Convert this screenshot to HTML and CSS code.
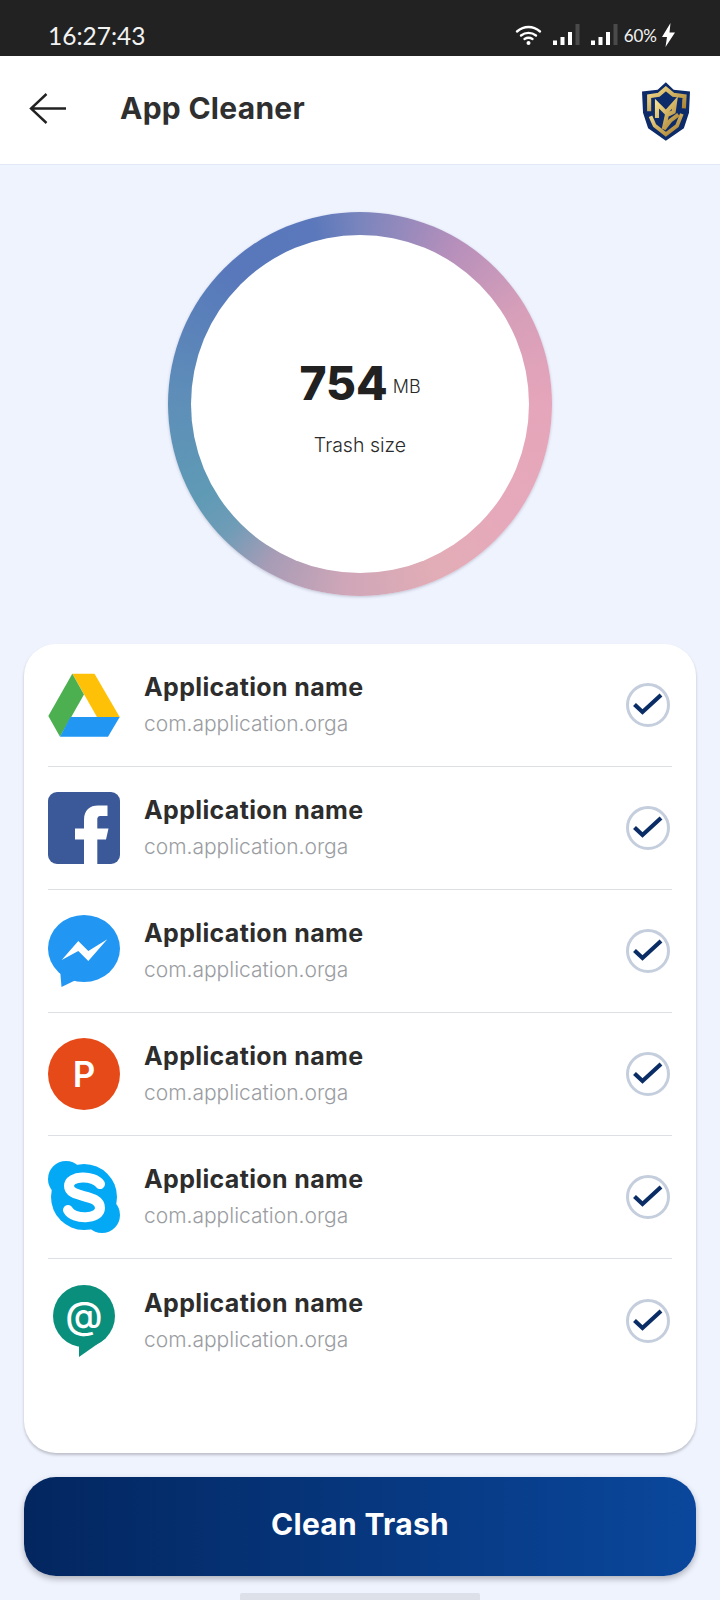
FILE: index.html
```html
<!DOCTYPE html>
<html lang="en">
<head>
<meta charset="utf-8">
<title>App Cleaner</title>
<link rel="stylesheet" href="styles.css">
</head>
<body>
<div class="status">
  <span class="time">16:27:43</span>
  <div class="status-icons">
    <svg class="wifi" width="28" height="20" viewBox="0 0 28 20"><g fill="none" stroke="#fff" stroke-width="2.4" stroke-linecap="round"><path d="M2 6.5C9 .5 18 .5 25 6.5"/><path d="M6 10.5C10.5 7 16.5 7 21 10.5"/><path d="M9.5 14C12 12.5 15 12.5 17.5 14"/></g><circle cx="13.5" cy="18" r="2" fill="#fff"/></svg>
    <svg class="signal" width="27" height="22" viewBox="0 0 27 22"><rect x="0" y="16.5" width="4" height="4.5" fill="#fff"/><rect x="7.5" y="13" width="4" height="8" fill="#fff"/><rect x="15" y="8" width="4" height="13" fill="#fff"/><rect x="22.5" y="0" width="4" height="21" fill="#4a4a4a"/></svg>
    <svg class="signal" width="27" height="22" viewBox="0 0 27 22"><rect x="0" y="16.5" width="4" height="4.5" fill="#fff"/><rect x="7.5" y="13" width="4" height="8" fill="#fff"/><rect x="15" y="8" width="4" height="13" fill="#fff"/><rect x="22.5" y="0" width="4" height="21" fill="#4a4a4a"/></svg>
    <span class="battery">60%</span>
    <svg class="bolt" width="13" height="24" viewBox="0 0 13 24"><path d="M8.5 0 0 14H5L3.5 24 13 9.5H7.5Z" fill="#fff"/></svg>
  </div>
</div>

<header class="header">
  <svg class="back" width="38" height="32" viewBox="0 0 38 32"><path d="M37 15.5H2M17.5 1 2 15.5 17.5 30" fill="none" stroke="#222" stroke-width="2.4"/></svg>
  <h1 class="title">App Cleaner</h1>
  <svg class="shield" width="48" height="59" viewBox="67 35 141 172">
    <defs><linearGradient id="gold" x1="0" y1="0" x2="1" y2="1"><stop offset="0" stop-color="#f3dc8e"/><stop offset="1" stop-color="#a67c2c"/></linearGradient></defs>
    <path d="M137 35 160 57 208 62 205 125 190 170 137 207 85 170 70 125 67 62 113 57Z" fill="#0c2b68"/>
    <path d="M88 120V76L116 72 137 54 159 72 192 76 190 112" fill="none" stroke="url(#gold)" stroke-width="12"/>
    <path d="M92 135 104 162 137 188 170 163 184 128" fill="none" stroke="url(#gold)" stroke-width="11"/>
    <path d="M111 140V98L137 124 164 94 160 122 140 132 131 172 150 148 174 130" fill="none" stroke="url(#gold)" stroke-width="12"/>
  </svg>
</header>

<section class="gauge">
  <div class="ring">
    <div class="ring-inner">
      <div class="amount"><span class="amount-value">754</span><span class="amount-unit">MB</span></div>
      <div class="amount-label">Trash size</div>
    </div>
  </div>
</section>

<section class="card">
  <div class="row">
    <svg class="icon" viewBox="0 0 72 72"><path d="M24.3 4.8H46.5L71.7 48H49Z" fill="#ffc107"/><path d="M24.3 4.8 36 25.5 12 67.8 .3 47Z" fill="#4caf50"/><path d="M22.5 48H71.7L60 67.8H12Z" fill="#2196f3"/></svg>
    <div class="info"><div class="name">Application name</div><div class="pkg">com.application.orga</div></div>
    <div class="check"><svg width="30" height="24" viewBox="0 0 30 24"><path d="M1.5 11.5 9.5 19 28 2" fill="none" stroke="#0b2d66" stroke-width="4.2"/></svg></div>
  </div>
  <div class="row">
    <svg class="icon" viewBox="0 0 72 72"><rect width="72" height="72" rx="9" fill="#3b5998"/><path d="M36 72V47.5H27V36.5H36V28C36 18 42 13.5 50 13.5H59.5V24H53C50 24 49.3 25.5 49.3 28V36.5H60.5L58 47.5H49.3V72Z" fill="#fff"/></svg>
    <div class="info"><div class="name">Application name</div><div class="pkg">com.application.orga</div></div>
    <div class="check"><svg width="30" height="24" viewBox="0 0 30 24"><path d="M1.5 11.5 9.5 19 28 2" fill="none" stroke="#0b2d66" stroke-width="4.2"/></svg></div>
  </div>
  <div class="row">
    <svg class="icon" viewBox="0 0 72 72"><ellipse cx="36" cy="33.5" rx="36" ry="33.5" fill="#2196f3"/><path d="M12 54 13.5 72 30 64Z" fill="#2196f3"/><path d="M13.7 45 30.3 26 40.3 36 59.3 24.3 40.3 46 30.3 36Z" fill="#fff"/></svg>
    <div class="info"><div class="name">Application name</div><div class="pkg">com.application.orga</div></div>
    <div class="check"><svg width="30" height="24" viewBox="0 0 30 24"><path d="M1.5 11.5 9.5 19 28 2" fill="none" stroke="#0b2d66" stroke-width="4.2"/></svg></div>
  </div>
  <div class="row">
    <div class="icon badge-p">P</div>
    <div class="info"><div class="name">Application name</div><div class="pkg">com.application.orga</div></div>
    <div class="check"><svg width="30" height="24" viewBox="0 0 30 24"><path d="M1.5 11.5 9.5 19 28 2" fill="none" stroke="#0b2d66" stroke-width="4.2"/></svg></div>
  </div>
  <div class="row">
    <svg class="icon" viewBox="0 0 72 72"><circle cx="36" cy="36" r="33" fill="#03a9f4"/><circle cx="18" cy="18" r="18" fill="#03a9f4"/><circle cx="54" cy="54" r="18" fill="#03a9f4"/><path d="M52 23C46 14 21 14 21 25 21 38 52 32 52 47 52 59 25 59 20 49" fill="none" stroke="#fff" stroke-width="10" stroke-linecap="round"/></svg>
    <div class="info"><div class="name">Application name</div><div class="pkg">com.application.orga</div></div>
    <div class="check"><svg width="30" height="24" viewBox="0 0 30 24"><path d="M1.5 11.5 9.5 19 28 2" fill="none" stroke="#0b2d66" stroke-width="4.2"/></svg></div>
  </div>
  <div class="row">
    <svg class="icon" viewBox="0 0 72 72"><circle cx="36" cy="31" r="31" fill="#0a8f7d"/><path d="M31 57V72L58 53Z" fill="#0a8f7d"/><text class="at" x="36" y="44" text-anchor="middle">@</text></svg>
    <div class="info"><div class="name">Application name</div><div class="pkg">com.application.orga</div></div>
    <div class="check"><svg width="30" height="24" viewBox="0 0 30 24"><path d="M1.5 11.5 9.5 19 28 2" fill="none" stroke="#0b2d66" stroke-width="4.2"/></svg></div>
  </div>
</section>

<button class="clean">Clean Trash</button>
<div class="home-pill"></div>
</body>
</html>
```
FILE: styles.css
```css
* { box-sizing: border-box; }
html, body { margin: 0; padding: 0; }
body {
  width: 720px;
  height: 1600px;
  overflow: hidden;
  background: #eff3fe;
  font-family: Inter, "Liberation Sans", sans-serif;
  color: #2b2b2b;
}
.status {
  height: 56px;
  background: #222222;
  display: flex;
  align-items: center;
  justify-content: space-between;
  padding: 14px 45px 0 48px;
  color: #f2f2f2;
}
.time { font-family: Lato, sans-serif; font-size: 24.5px; font-weight: 400; }
.status-icons { display: flex; align-items: center; }
.wifi { margin-right: 10px; }
.signal { margin-right: 11px; }
.battery { font-family: Lato, sans-serif; font-size: 17px; margin-left: -5px; margin-right: 5px; }
.header {
  height: 109px;
  background: #fff;
  border-bottom: 1px solid #e3e8f5;
  display: flex;
  align-items: center;
  padding: 0 30px 2px 29px;
}
.title { margin: 0 0 3px 53px; flex: 1; font-size: 30px; font-weight: 700; letter-spacing: 0.27px; color: #2f2f2f; }
.shield { margin-top: 5px; }
.gauge { display: flex; justify-content: center; padding: 47px 0 48px; }
.ring {
  width: 384px;
  height: 384px;
  border-radius: 50%;
  display: flex;
  align-items: center;
  justify-content: center;
  background: conic-gradient(from 0deg, #7a85bd 0deg, #b58fbb 30deg, #d79fb9 60deg, #e5a5ba 90deg, #e6a9bb 130deg, #e2adb6 155deg, #cfa6b8 185deg, #a79cb6 210deg, #6f9cb7 226deg, #5f9ab5 240deg, #5e8fb8 270deg, #5878bb 315deg, #5a78bb 345deg, #7a85bd 360deg);
  box-shadow: 0 1px 3px rgba(60, 60, 90, .25);
}
.ring-inner {
  width: 338px;
  height: 338px;
  border-radius: 50%;
  background: #fff;
  display: flex;
  flex-direction: column;
  align-items: center;
  justify-content: center;
  padding-top: 8px;
}
.amount { display: flex; align-items: center; height: 48px; }
.amount-value { font-size: 46px; font-weight: 800; color: #212121; }
.amount-unit { font-size: 18px; font-weight: 300; margin: 6px 0 0 5px; }
.amount-label { margin-top: 26px; font-size: 19.5px; font-weight: 300; line-height: 24px; }
.card {
  margin: 0 24px;
  height: 809px;
  padding: 0 24px;
  background: #fff;
  border-radius: 32px;
  box-shadow: 0 2px 3px rgba(0, 0, 0, .22);
}
.row {
  height: 123px;
  display: flex;
  align-items: center;
  border-bottom: 1px solid #dcdfe4;
}
.row:last-child { border-bottom: none; }
.icon { width: 72px; height: 72px; flex: none; }
.badge-p {
  border-radius: 50%;
  background: #e64a19;
  color: #fff;
  font-size: 35px;
  font-weight: 600;
  display: flex;
  align-items: center;
  justify-content: center;
}
.at { font-family: Inter, sans-serif; font-size: 38px; font-weight: 500; fill: #fff; }
.info { flex: 1; margin-left: 24px; padding-bottom: 2px; }
.name { font-size: 25px; font-weight: 700; letter-spacing: 0.36px; line-height: 30px; color: #2d2d2d; }
.pkg { margin-top: 10px; font-size: 21px; font-weight: 300; line-height: 24px; color: #9a9da2; }
.check {
  width: 44px;
  height: 44px;
  margin-right: 2px;
  border: 3px solid #c5cedd;
  border-radius: 50%;
  display: flex;
  align-items: center;
  justify-content: center;
}
.clean {
  display: block;
  width: 672px;
  height: 99px;
  margin: 24px 24px 0;
  padding: 0 0 6px;
  border: none;
  border-radius: 32px;
  background: linear-gradient(90deg, #03265f 0%, #0a479c 100%);
  box-shadow: 0 3px 6px rgba(0, 0, 0, .28);
  color: #fff;
  font-family: Inter, sans-serif;
  font-size: 30px;
  font-weight: 700;
  letter-spacing: 0.3px;
}
.home-pill { width: 240px; height: 7px; margin: 17px auto 0; background: #dde0e8; border-radius: 2px 2px 0 0; }
```
